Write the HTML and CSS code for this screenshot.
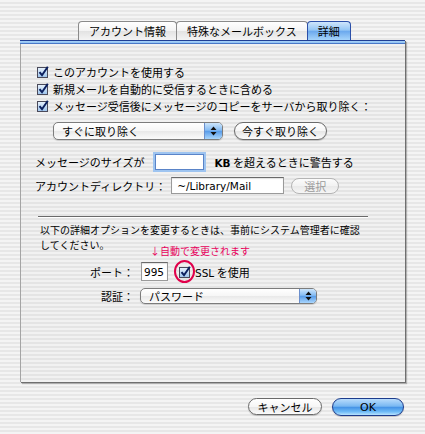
FILE: index.html
```html
<!DOCTYPE html>
<html lang="ja">
<head>
<meta charset="utf-8">
<title>詳細</title>
<link rel="stylesheet" href="styles.css">
</head>
<body>
<div class="window">
  <div class="tabs">
    <div class="tab">アカウント情報</div>
    <div class="tab">特殊なメールボックス</div>
    <div class="tab selected">詳細</div>
  </div>
  <div class="panel">
    <div class="panel-bar"></div>
    <div class="panel-body">
      <div class="checks">
        <div class="check-row">
          <svg class="cb" width="12" height="12" viewBox="0 0 12 12"><defs><linearGradient id="cg1" x1="0" y1="0" x2="0" y2="1"><stop offset="0" stop-color="#e9f3fd"/><stop offset="1" stop-color="#9cc3ec"/></linearGradient></defs><rect x="0.5" y="1.5" width="10" height="10" fill="url(#cg1)" stroke="#4a4a5a"/><path d="M2.5 6.2 L5 9.2 L10.8 0.8" fill="none" stroke="#0b1f5e" stroke-width="2"/></svg>
          <span>このアカウントを使用する</span>
        </div>
        <div class="check-row">
          <svg class="cb" width="12" height="12" viewBox="0 0 12 12"><rect x="0.5" y="1.5" width="10" height="10" fill="url(#cg1)" stroke="#4a4a5a"/><path d="M2.5 6.2 L5 9.2 L10.8 0.8" fill="none" stroke="#0b1f5e" stroke-width="2"/></svg>
          <span>新規メールを自動的に受信するときに含める</span>
        </div>
        <div class="check-row">
          <svg class="cb" width="12" height="12" viewBox="0 0 12 12"><rect x="0.5" y="1.5" width="10" height="10" fill="url(#cg1)" stroke="#4a4a5a"/><path d="M2.5 6.2 L5 9.2 L10.8 0.8" fill="none" stroke="#0b1f5e" stroke-width="2"/></svg>
          <span>メッセージ受信後にメッセージのコピーをサーバから取り除く：</span>
        </div>
      </div>

      <div class="popup-row">
        <div class="popup remove-popup">
          <span class="popup-label">すぐに取り除く</span>
          <span class="popup-arrows"><svg width="7" height="10" viewBox="0 0 7 10"><path d="M3.5 0.5 L6.5 4 L0.5 4 Z M3.5 9.5 L6.5 6 L0.5 6 Z" fill="#111"/></svg></span>
        </div>
        <div class="btn remove-btn">今すぐ取り除く</div>
      </div>

      <div class="field-row size-row">
        <span>メッセージのサイズが</span>
        <div class="textbox size-box"></div>
        <span><b class="latin">KB</b> を超えるときに警告する</span>
      </div>

      <div class="field-row dir-row">
        <span>アカウントディレクトリ：</span>
        <div class="textbox dir-box"><span class="latin">~/Library/Mail</span></div>
        <div class="btn disabled choose-btn">選択</div>
      </div>

      <div class="divider"></div>

      <p class="note">以下の詳細オプションを変更するときは、事前にシステム管理者に確認<br>してください。</p>

      <div class="port-block">
        <div class="annot">↓自動で変更されます</div>
        <div class="form-row">
          <span class="label">ポート：</span>
          <div class="textbox port-box"><span class="latin">995</span></div>
          <span class="ssl-cb">
            <svg class="cb" width="12" height="12" viewBox="0 0 12 12"><rect x="0.5" y="1.5" width="10" height="10" fill="url(#cg1)" stroke="#4a4a5a"/><path d="M2.5 6.2 L5 9.2 L10.8 0.8" fill="none" stroke="#0b1f5e" stroke-width="2"/></svg>
            <span class="circle"></span>
          </span>
          <span class="ssl-text"><span class="latin">SSL</span> を使用</span>
        </div>
        <div class="form-row auth-row">
          <span class="label">認証：</span>
          <div class="popup auth-popup">
            <span class="popup-label">パスワード</span>
            <span class="popup-arrows"><svg width="7" height="10" viewBox="0 0 7 10"><path d="M3.5 0.5 L6.5 4 L0.5 4 Z M3.5 9.5 L6.5 6 L0.5 6 Z" fill="#111"/></svg></span>
          </div>
        </div>
      </div>
    </div>
  </div>
  <div class="buttons">
    <div class="btn cancel-btn">キャンセル</div>
    <div class="btn default-btn">OK</div>
  </div>
</div>
</body>
</html>
```

FILE: styles.css
```css
html, body {
  margin: 0;
  padding: 0;
}
body {
  width: 425px;
  height: 434px;
  overflow: hidden;
  font-family: "Noto Sans CJK JP", "Noto Sans", sans-serif;
  font-size: 11px;
  color: #000;
  background: repeating-linear-gradient(to bottom, #f4f4f4 0, #f4f4f4 2px, #e7e7e7 2px, #e7e7e7 4px);
}
.latin {
  font-family: "DejaVu Sans", "Noto Sans", sans-serif;
  font-size: 10.5px;
}
b.latin { font-weight: bold; }

.window {
  padding-top: 21px;
}

/* Tabs */
.tabs {
  display: flex;
  margin-left: 78px;
  height: 19px;
}
.tab {
  box-sizing: border-box;
  height: 19px;
  padding: 0 10px;
  line-height: 18px;
  border: 1px solid #8a8a8a;
  border-bottom: none;
  border-radius: 4px 4px 0 0;
  background: linear-gradient(#ffffff, #f3f3f3 50%, #e3e3e3 52%, #f4f4f4);
  margin-right: -1px;
}
.tab.selected {
  border-color: #2b4fa8;
  background: linear-gradient(#cfe6fc, #94c6f5 45%, #6ca9ee 52%, #a6d4fb);
}

/* Panel */
.panel {
  margin: 0 20px;
  height: 342px;
  box-sizing: border-box;
  border-left: 1px solid #a4a4a4;
  background: repeating-linear-gradient(to bottom, #f1f1f1 0, #f1f1f1 2px, #e4e4e4 2px, #e4e4e4 4px);
  box-shadow: 1px 1px 0 #6f6f6f, 2px 2px 1px rgba(0,0,0,0.25);
}
.panel-bar {
  height: 4px;
  margin-left: -1px;
  background: linear-gradient(#1f3f95 0, #1f3f95 1px, #a9d3f8 1px, #8cc0f2 3px, #4a78c8 3px, #4a78c8 4px);
}
.panel-body {
  padding: 19px 0 0 14px;
}

/* Checkboxes */
.checks {
  margin-left: 2px;
}
.check-row {
  display: flex;
  align-items: center;
  gap: 4px;
  height: 17px;
}
.cb {
  display: block;
  flex: none;
}

/* Popups & buttons */
.popup-row {
  display: flex;
  gap: 11px;
  margin: 8px 0 0 18px;
}
.popup {
  box-sizing: border-box;
  display: flex;
  align-items: center;
  border: 1px solid #7c7c7c;
  border-radius: 5px;
  background: linear-gradient(#ffffff, #f6f6f6 50%, #e9e9e9 52%, #fbfbfb);
  overflow: hidden;
  box-shadow: 0 1px 1px rgba(0,0,0,0.15);
}
.popup-label {
  flex: 1;
  padding-left: 8px;
}
.popup-arrows {
  align-self: stretch;
  display: flex;
  align-items: center;
  justify-content: center;
  border-left: 1px solid #6b8fcc;
  background: linear-gradient(#cde5fb, #86bcf3 45%, #5a9de9 52%, #a9d6fd);
}
.remove-popup {
  width: 170px;
  height: 18px;
}
.remove-popup .popup-arrows { width: 17px; }
.btn {
  box-sizing: border-box;
  display: flex;
  align-items: center;
  justify-content: center;
  border: 1px solid #6a6a6a;
  border-radius: 9px;
  background: linear-gradient(#ffffff, #f6f6f6 50%, #e6e6e6 52%, #fbfbfb);
  box-shadow: 0 1px 1px rgba(0,0,0,0.2);
}
.remove-btn {
  width: 93px;
  height: 18px;
}

/* Field rows */
.field-row {
  display: flex;
  align-items: center;
  height: 17px;
}
.size-row { margin-top: 13px; }
.dir-row { margin-top: 7px; }
.textbox {
  box-sizing: border-box;
  display: flex;
  align-items: center;
  background: #fff;
  border: 1px solid #9a9a9a;
  border-top-color: #6a6a6a;
  box-shadow: inset 0 1px 1px rgba(0,0,0,0.12);
}
.size-box {
  width: 49px;
  height: 16px;
  margin: 0 10px 0 11px;
  border: 1px solid #5a84c8;
  box-shadow: 0 0 0 2px #9ec4f0;
}
.dir-box {
  width: 113px;
  height: 17px;
  margin-left: 5px;
  padding-left: 5px;
}
.choose-btn {
  width: 48px;
  height: 16px;
  margin-left: 7px;
  color: #9a9a9a;
  border-color: #b4b4b4;
  background: linear-gradient(#fbfbfb, #f2f2f2 50%, #e9e9e9 52%, #f6f6f6);
  box-shadow: none;
}

/* Divider */
.divider {
  margin: 22px 0 0 3px;
  width: 330px;
  height: 1px;
  background: #6a6a6a;
  border-bottom: 1px solid #ffffff;
}

.note {
  margin: 4px 0 0 5px;
  font-size: 10px;
  line-height: 15px;
  white-space: nowrap;
}

/* Port / auth */
.port-block {
  position: relative;
  margin-top: 10px;
}
.annot {
  position: absolute;
  left: 115px;
  top: -17px;
  font-size: 10px;
  line-height: 12px;
  color: #e8005c;
  white-space: nowrap;
}
.form-row {
  display: flex;
  align-items: center;
  height: 19px;
}
.label {
  width: 99px;
  text-align: right;
}
.port-box {
  width: 27px;
  height: 19px;
  margin-left: 7px;
  padding-left: 2px;
}
.ssl-cb {
  position: relative;
  margin-left: 11px;
}
.circle {
  position: absolute;
  left: -5px;
  top: -6px;
  width: 17px;
  height: 19px;
  border: 2px solid #e0004a;
  border-radius: 50%;
}
.ssl-text {
  margin-left: 4px;
}
.auth-row {
  margin-top: 7px;
  height: 16px;
}
.auth-popup {
  width: 177px;
  height: 16px;
  margin-left: 6px;
}
.auth-popup .popup-arrows { width: 16px; }

/* Bottom buttons */
.buttons {
  display: flex;
  justify-content: flex-end;
  gap: 10px;
  margin-top: 16px;
  padding-right: 21px;
}
.cancel-btn {
  width: 74px;
  height: 17px;
}
.default-btn {
  width: 72px;
  height: 18px;
  border-color: #1d3c8c;
  font-family: "DejaVu Sans", sans-serif;
  background: linear-gradient(#b9dcfc, #79b8f2 45%, #4593e6 52%, #6fbcf7 80%, #b9e4ff);
}
```
